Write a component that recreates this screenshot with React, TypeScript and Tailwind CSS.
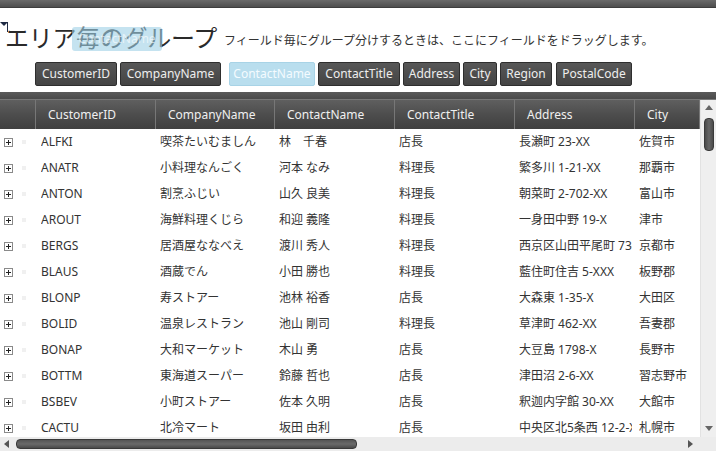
import React from "react";

const cols = [
  { key: "id", label: "CustomerID", w: "w-[120px]" },
  { key: "company", label: "CompanyName", w: "w-[119px]" },
  { key: "contact", label: "ContactName", w: "w-[120px]" },
  { key: "title", label: "ContactTitle", w: "w-[120px]" },
  { key: "address", label: "Address", w: "w-[120px]" },
  { key: "city", label: "City", w: "w-[65px]" },
];

const rows = [
  ["ALFKI", "喫茶たいむましん", "林　千春", "店長", "長瀬町 23-XX", "佐賀市"],
  ["ANATR", "小料理なんごく", "河本 なみ", "料理長", "繁多川 1-21-XX", "那覇市"],
  ["ANTON", "割烹ふじい", "山久 良美", "料理長", "朝菜町 2-702-XX", "富山市"],
  ["AROUT", "海鮮料理くじら", "和迎 義隆", "料理長", "一身田中野 19-X", "津市"],
  ["BERGS", "居酒屋ななべえ", "渡川 秀人", "料理長", "西京区山田平尾町 73-XX", "京都市"],
  ["BLAUS", "酒蔵でん", "小田 勝也", "料理長", "藍住町住吉 5-XXX", "板野郡"],
  ["BLONP", "寿ストアー", "池林 裕香", "店長", "大森東 1-35-X", "大田区"],
  ["BOLID", "温泉レストラン", "池山 剛司", "料理長", "草津町 462-XX", "吾妻郡"],
  ["BONAP", "大和マーケット", "木山 勇", "店長", "大豆島 1798-X", "長野市"],
  ["BOTTM", "東海道スーパー", "鈴藤 哲也", "店長", "津田沼 2-6-XX", "習志野市"],
  ["BSBEV", "小町ストアー", "佐本 久明", "店長", "釈迦内字館 30-XX", "大館市"],
  ["CACTU", "北冷マート", "坂田 由利", "店長", "中央区北5条西 12-2-XX", "札幌市"],
];

const chips = [
  { label: "CustomerID", cls: "w-[82px]" },
  { label: "CompanyName", cls: "w-[101px] ml-[3px]" },
  { label: "ContactName", cls: "w-[86px] ml-[8px]", ghost: true },
  { label: "ContactTitle", cls: "w-[82px] ml-[3px]" },
  { label: "Address", cls: "w-[57px] ml-[3px]" },
  { label: "City", cls: "w-[34px] ml-[3px]" },
  { label: "Region", cls: "w-[52px] ml-[3px]" },
  { label: "PostalCode", cls: "w-[76px] ml-[4px]" },
];

function ExpandIcon() {
  return (
    <svg width="9" height="9" viewBox="0 0 9 9" className="shrink-0">
      <rect x="0.5" y="0.5" width="8" height="8" fill="#fff" stroke="#8a8a8a" />
      <path d="M2 4.5h5M4.5 2v5" stroke="#222" strokeWidth="1" />
    </svg>
  );
}

export default function App() {
  return (
    <div
      className="w-[716px] h-[457px] overflow-hidden bg-white flex flex-col text-[12px] text-[#333]"
      style={{ fontFamily: '"Noto Sans", "Noto Sans CJK JP", sans-serif' }}
    >
      {/* top bar */}
      <div className="h-[8px] bg-gradient-to-b from-[#6a6a6a] to-[#4e4e4e] border-b border-[#3d3d3d]" />

      {/* group-by area */}
      <div className="relative h-[84px] bg-white flex flex-col">
        <div className="flex items-end pl-[5px] pt-[15px] h-[44px]">
          <span className="text-[24px] leading-[28px] text-[#2a2a2a] tracking-[-0.3px]">
            エリア毎のグループ
          </span>
          <span className="ml-[7px] mb-[3px] text-[12px] leading-[16px] text-[#333]">
            フィールド毎にグループ分けするときは、ここにフィールドをドラッグします。
          </span>
        </div>
        <div className="flex items-center pl-[35px] mt-[10px] h-[24px]">
          {chips.map((c) => (
            <div
              key={c.label}
              className={`${c.cls} h-[24px] flex items-center justify-center rounded-[2px] border ${
                c.ghost
                  ? "bg-[#b9deee] border-[#a8d3e6] text-[#f4fbff]"
                  : "bg-gradient-to-b from-[#575757] to-[#444] border-[#2e2e2e] text-[#eee]"
              } text-[12px] whitespace-nowrap`}
            >
              {c.label}
            </div>
          ))}
        </div>

        {/* drop indicator */}
        <svg className="absolute left-0 top-[13px]" width="10" height="12" viewBox="0 0 10 12">
          <path d="M0 1h8L4 5z" fill="#1e2a44" />
          <path d="M7.5 1v10" stroke="#1e2a44" strokeWidth="1" />
        </svg>

        {/* drag ghost */}
        <div className="absolute left-[72px] top-[19px] w-[90px] h-[24px] rounded-[3px] bg-[#9fd0e6]/60 flex items-center justify-center text-[12px] text-white/60">
          ContactName
        </div>
      </div>

      {/* separator bar */}
      <div className="h-[8px] bg-gradient-to-b from-[#5a5a5a] to-[#4a4a4a] border-b border-[#777]" />

      {/* grid */}
      <div className="flex h-[337px] bg-[#efefef]">
        <div className="w-[700px] overflow-hidden flex flex-col">
          <div className="h-[29px] shrink-0 flex bg-gradient-to-b from-[#5f5f5f] via-[#4d4d4d] to-[#3f3f3f] text-[#f0f0f0] text-[12px]">
            <div className="w-[36px] shrink-0 border-r border-[#777]" />
            {cols.map((c) => (
              <div
                key={c.key}
                className={`${c.w} shrink-0 flex items-center pl-[12px] border-r border-[#777] whitespace-nowrap`}
              >
                {c.label}
              </div>
            ))}
          </div>
          {rows.map((r) => (
            <div key={r[0]} className="h-[26px] shrink-0 flex items-center bg-white">
              <div className="w-[36px] shrink-0 flex items-center pl-[4px] gap-[9px]">
                <ExpandIcon />
                <span className="w-[4px] h-[4px] bg-[#f0f0f0]" />
              </div>
              {cols.map((c, i) => (
                <div key={c.key} className={`${c.w} shrink-0 pr-[3px] ${i === 0 ? "pl-[5px]" : "pl-[4px]"}`}>
                  <div className="overflow-hidden whitespace-nowrap">{r[i]}</div>
                </div>
              ))}
            </div>
          ))}
        </div>

        {/* vertical scrollbar */}
        <div className="w-[16px] flex flex-col items-center bg-[#efefef] border-l border-[#e2e2e2]">
          <svg width="8" height="5" viewBox="0 0 8 5" className="mt-[5px]">
            <path d="M0 5L4 0L8 5z" fill="#666" />
          </svg>
          <div className="mt-[8px] w-[10px] h-[33px] rounded-[4px] bg-gradient-to-r from-[#4a4a4a] via-[#666] to-[#4a4a4a] border border-[#3a3a3a]" />
          <div className="flex-1" />
          <svg width="8" height="5" viewBox="0 0 8 5" className="mb-[6px]">
            <path d="M0 0L4 5L8 0z" fill="#666" />
          </svg>
        </div>
      </div>

      {/* horizontal scrollbar */}
      <div className="h-[14px] flex items-center bg-[#ececec]">
        <svg width="5" height="8" viewBox="0 0 5 8" className="ml-[4px]">
          <path d="M5 0L0 4L5 8z" fill="#555" />
        </svg>
        <div className="ml-[7px] w-[341px] h-[10px] rounded-[4px] bg-gradient-to-b from-[#555] via-[#6a6a6a] to-[#4a4a4a] border border-[#3a3a3a]" />
        <div className="flex-1" />
        <svg width="5" height="8" viewBox="0 0 5 8" className="mr-[23px]">
          <path d="M0 0L5 4L0 8z" fill="#555" />
        </svg>
      </div>
      <div className="flex-1 bg-white" />
    </div>
  );
}
